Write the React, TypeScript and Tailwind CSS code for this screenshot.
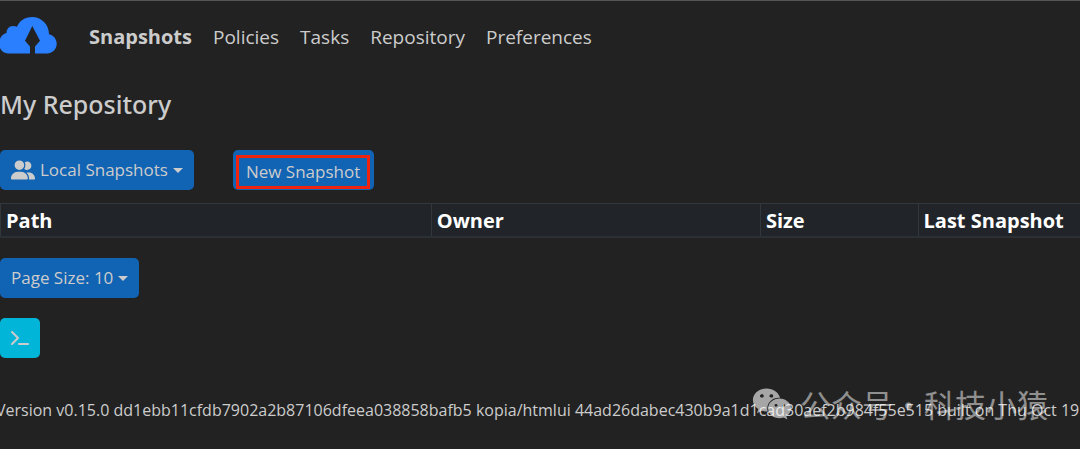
import { FaTerminal, FaUserGroup, FaWeixin } from "react-icons/fa6";

const navItems = ["Policies", "Tasks", "Repository", "Preferences"];

const columns = [
    { name: "Path", width: "w-[39.9%]" },
    { name: "Owner", width: "w-[30.5%]" },
    { name: "Size", width: "w-[14.6%]" },
    { name: "Last Snapshot", width: "w-[15%]" },
];

function Logo() {
    return (
        <svg viewBox="0 0 57 37" className="w-[57px] h-[37px]" aria-label="Kopia" role="img">
            <path
                fill="#2a7fff"
                d="M8 36.500C3 36.500 -1 32 -1 26.500C-1 21.300 2 17.300 6.500 16C6.500 11.800 9.300 9 13 9C14.600 9 15.900 9.300 17 9.800C19.300 3.800 25 0 32 0C41.500 0 49 7.500 49 17.300C53.500 18.200 56.700 22.200 56.700 26.800C56.700 32.200 52.300 36.500 47 36.500H35V29.500L40 23.800L32.300 9L25 23.800L30 29.500V36.500Z"
            />
        </svg>
    );
}

function Caret() {
    return <span className="border-x-5 border-t-5 border-x-transparent border-t-[#ccc]" />;
}

export default function App() {
    return (
        <div className="min-h-screen overflow-hidden border-t border-[#555] bg-[#222] text-[#ccc] font-['Open_Sans','Noto_Sans',sans-serif]">
            <nav className="flex items-start pt-4">
                <a href="#home"><Logo /></a>
                <div className="ml-8 flex items-center gap-[21px] text-[19px] leading-10">
                    <a href="#snapshots" className="text-[20px] font-bold">Snapshots</a>
                    {navItems.map((item) => (
                        <a key={item} href={"#" + item.toLowerCase()}>{item}</a>
                    ))}
                </div>
            </nav>

            <h1 className="mt-[31px] text-[25px] leading-8 font-medium font-['Noto_Sans',sans-serif]">My Repository</h1>

            <div className="mt-[30px] flex items-center gap-[39px] text-[17px]">
                <button type="button" className="flex h-10 items-center gap-[5px] rounded-[5px] bg-[#1163b3] px-[11px]">
                    <FaUserGroup className="w-6 h-5" />
                    Local Snapshots
                    <Caret />
                </button>
                <button type="button" className="flex h-10 items-end rounded-[5px] bg-[#1163b3] pr-1 pb-px pl-[3px]">
                    <span className="border-3 border-[#f0230f] px-[7px] leading-7">New Snapshot</span>
                </button>
            </div>

            {/* Snapshot list */}
            <table className="mt-[13px] w-full table-fixed border-collapse text-left text-[20px] leading-[30px] text-white">
                <thead>
                    <tr className="border-t border-b-2 border-t-[#32373b] border-b-[#2c3034] bg-[#212529]">
                        {columns.map((column) => (
                            <th key={column.name} scope="col" className={"border-l border-l-[#32373b] px-[5px] pt-0.5 font-bold whitespace-nowrap " + column.width}>
                                {column.name}
                            </th>
                        ))}
                    </tr>
                </thead>
            </table>

            <button type="button" className="mt-5 flex h-10 items-center gap-[5px] rounded-[5px] bg-[#1163b3] px-[11px] text-[17px]">
                Page Size: 10
                <Caret />
            </button>

            <button type="button" aria-label="Show CLI command" className="mt-5 flex size-10 items-center justify-center rounded-[5px] bg-[#00b5d8]">
                <FaTerminal className="size-[18px]" />
            </button>

            <footer className="relative mt-10">
                <p className="-ml-1 text-[16px] leading-6 whitespace-nowrap">
                    Version v0.15.0 dd1ebb11cfdb7902a2b87106dfeea038858bafb5 kopia/htmlui 44ad26dabec430b9a1d1cad30aef2b984f55e515 built on Thu Oct 19
                </p>
                {/* Watermark */}
                <div className="absolute right-8 -top-3.5 flex items-center gap-2 text-[31px] leading-10 whitespace-nowrap text-white/50 font-['Noto_Sans_CJK_SC',sans-serif]">
                    <FaWeixin className="size-10 text-white/60" />
                    <span>公众号·科技小猿</span>
                </div>
            </footer>
        </div>
    );
}
